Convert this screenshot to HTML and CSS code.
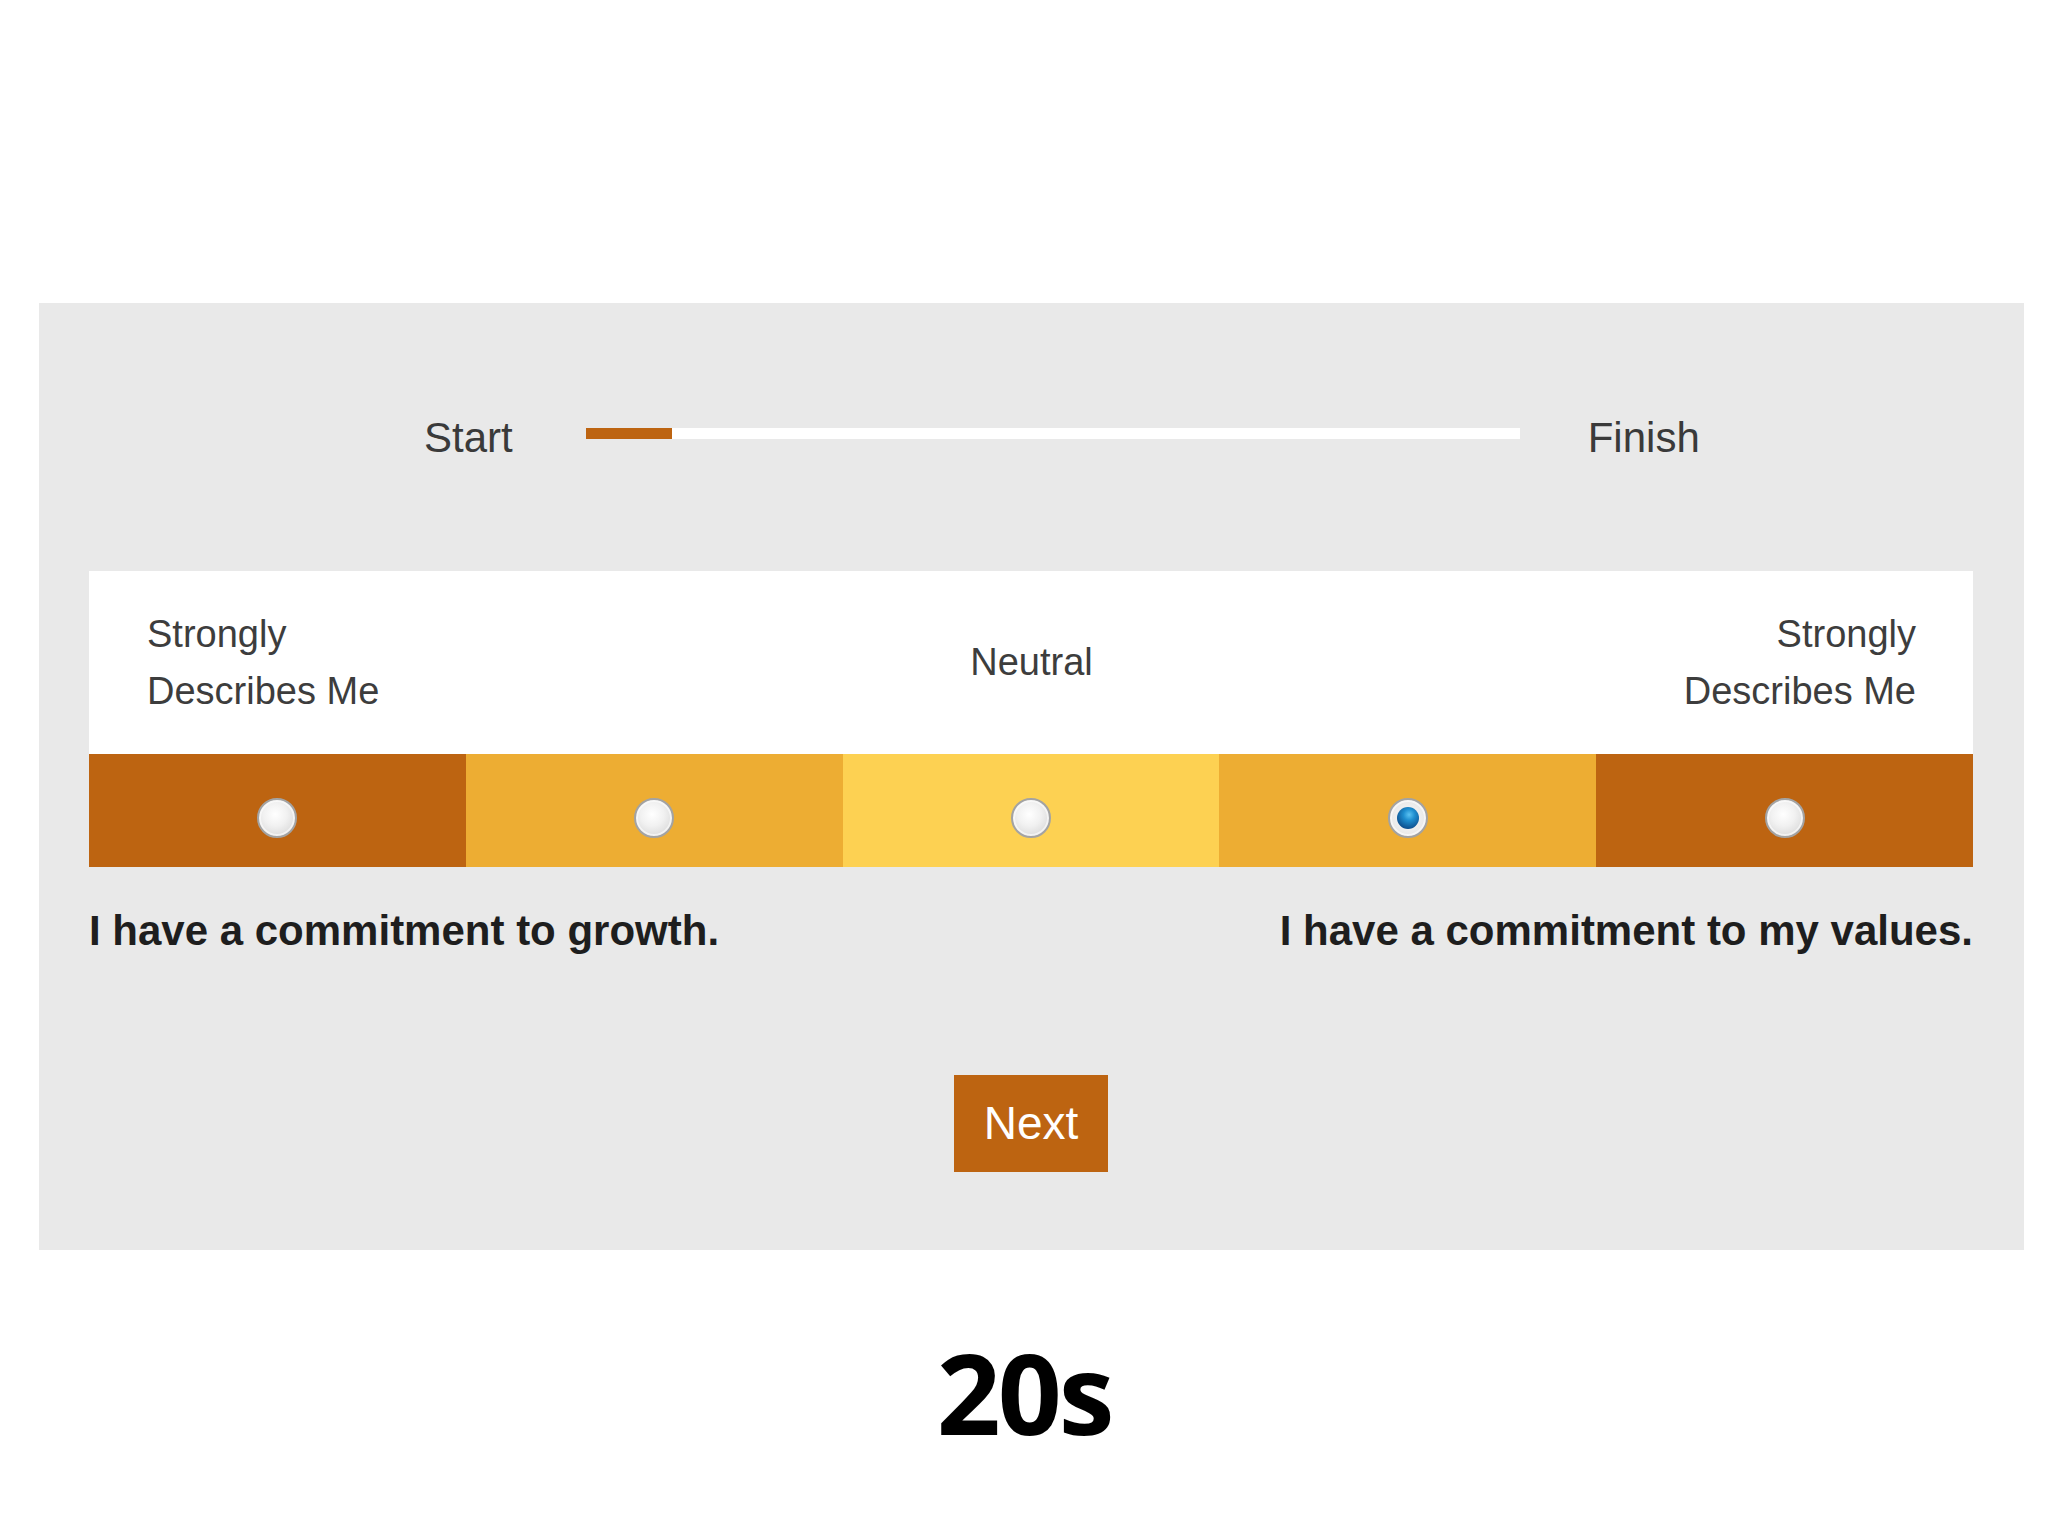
FILE: index.html
```html
<!DOCTYPE html>
<html lang="en">
<head>
<meta charset="utf-8">
<title>Survey</title>
<link rel="stylesheet" href="styles.css">
</head>
<body>
<div class="screen">
  <div class="panel">
    <div class="progress">
      <span class="plabel start">Start</span>
      <div class="track"><div class="fill" style="width:9.2%"></div></div>
      <span class="plabel finish">Finish</span>
    </div>

    <div class="scale">
      <div class="scale-head">
        <div class="hl left">Strongly<br>Describes Me</div>
        <div class="hl mid">Neutral</div>
        <div class="hl right">Strongly<br>Describes Me</div>
      </div>
      <div class="band">
        <div class="seg dark"><span class="radio"></span></div>
        <div class="seg mid"><span class="radio"></span></div>
        <div class="seg light"><span class="radio"></span></div>
        <div class="seg mid"><span class="radio checked"></span></div>
        <div class="seg dark"><span class="radio"></span></div>
      </div>
    </div>

    <div class="statements">
      <span class="stmt">I have a commitment to growth.</span>
      <span class="stmt">I have a commitment to my values.</span>
    </div>

    <div class="actions">
      <button class="next" type="button">Next</button>
    </div>
  </div>

  <div class="timer">20s</div>
</div>
</body>
</html>
```

FILE: styles.css
```css
html, body {
  margin: 0;
  padding: 0;
  background: #ffffff;
}

.screen {
  width: 2048px;
  height: 1536px;
  padding-top: 303px;
  box-sizing: border-box;
  font-family: "Liberation Sans", Arial, sans-serif;
}

.panel {
  margin-left: 39px;
  width: 1985px;
  height: 947px;
  box-sizing: border-box;
  background: #e9e9e9;
  padding: 111px 51px 0 50px;
}

/* progress */
.progress {
  display: flex;
  align-items: flex-start;
  height: 48px;
  padding-left: 335px;
}

.plabel {
  font-size: 42px;
  line-height: 48px;
  color: #3a3a3a;
}

.track {
  width: 934px;
  height: 11px;
  background: #ffffff;
  margin: 14px 68px 0 73px;
}

.fill {
  height: 100%;
  background: #bd6411;
}

/* scale */
.scale {
  margin-top: 109px;
}

.scale-head {
  height: 183px;
  background: #ffffff;
  display: grid;
  grid-template-columns: 1fr auto 1fr;
  align-items: center;
  padding: 0 57px 0 58px;
}

.hl {
  font-size: 38px;
  line-height: 57px;
  color: #3d3d3d;
}

.hl.left { justify-self: start; text-align: left; }
.hl.mid { justify-self: center; text-align: center; }
.hl.right { justify-self: end; text-align: right; }

.band {
  display: grid;
  grid-template-columns: repeat(5, 1fr);
  height: 113px;
}

.seg {
  display: flex;
  justify-content: center;
  align-items: center;
  padding-top: 14px;
  box-sizing: border-box;
}

.seg.dark { background: #bd6411; }
.seg.mid { background: #edad33; }
.seg.light { background: #fdd152; }

.radio {
  width: 40px;
  height: 40px;
  border-radius: 50%;
  box-sizing: border-box;
  border: 2px solid #a3a3a3;
  background: radial-gradient(circle at 45% 40%, #ffffff 0%, #f1f1f1 40%, #d6d6d6 85%, #c8c8c8 100%);
  box-shadow: inset 0 0 0 2px rgba(255,255,255,0.6);
  position: relative;
}

.radio.checked {
  background: radial-gradient(circle at 50% 50%, #fafafa 0%, #e8e8e8 70%, #cfcfcf 100%);
}

.radio.checked::after {
  content: "";
  position: absolute;
  left: 7px;
  top: 7px;
  width: 22px;
  height: 22px;
  border-radius: 50%;
  background: radial-gradient(circle at 55% 35%, #5cc3f2 0%, #1f8fd0 30%, #0d4f8e 75%, #0a3a6d 100%);
}

/* statements */
.statements {
  display: flex;
  justify-content: space-between;
  margin-top: 40px;
}

.stmt {
  font-size: 42px;
  line-height: 48px;
  font-weight: 700;
  color: #1e1e1e;
}

/* actions */
.actions {
  display: flex;
  justify-content: center;
  margin-top: 120px;
}

.next {
  width: 154px;
  height: 97px;
  border: 0;
  margin: 0;
  padding: 0;
  background: #bd6411;
  color: #ffffff;
  font-family: "Liberation Sans", Arial, sans-serif;
  font-size: 46px;
  line-height: 97px;
  cursor: pointer;
}

/* timer */
.timer {
  margin-top: 77px;
  text-align: center;
  font-family: "Open Sans", "Noto Sans", sans-serif;
  font-weight: 700;
  font-size: 112px;
  line-height: 130px;
  color: #000000;
  letter-spacing: -3px;
}
```
